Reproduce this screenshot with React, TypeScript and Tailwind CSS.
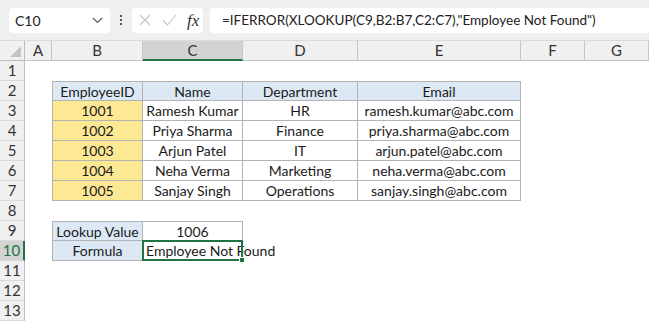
import React from 'react';

type Kind = 'none' | 'head' | 'id' | 'val' | 'label' | 'sel';

type Cell = { text?: string; kind?: Kind; top?: boolean; left?: boolean };

const colLetters = ['A', 'B', 'C', 'D', 'E', 'F', 'G'];

const people = [
  ['1001', 'Ramesh Kumar', 'HR', 'ramesh.kumar@abc.com'],
  ['1002', 'Priya Sharma', 'Finance', 'priya.sharma@abc.com'],
  ['1003', 'Arjun Patel', 'IT', 'arjun.patel@abc.com'],
  ['1004', 'Neha Verma', 'Marketing', 'neha.verma@abc.com'],
  ['1005', 'Sanjay Singh', 'Operations', 'sanjay.singh@abc.com'],
];

const blank = (): Cell[] => Array.from({ length: 7 }, () => ({}));

const buildRows = (): Cell[][] => {
  const rows: Cell[][] = [];
  for (let i = 0; i < 13; i++) rows.push(blank());
  const heads = ['EmployeeID', 'Name', 'Department', 'Email'];
  heads.forEach((h, i) => {
    rows[1][i + 1] = { text: h, kind: 'head', top: true, left: i === 0 };
  });
  people.forEach((p, r) => {
    p.forEach((v, i) => {
      rows[r + 2][i + 1] = { text: v, kind: i === 0 ? 'id' : 'val', left: i === 0 };
    });
  });
  rows[8][1] = { text: 'Lookup Value', kind: 'label', top: true, left: true };
  rows[8][2] = { text: '1006', kind: 'val', top: true };
  rows[9][1] = { text: 'Formula', kind: 'label', left: true };
  rows[9][2] = { text: 'Employee Not Found', kind: 'sel' };
  return rows;
};

const kindClass: Record<Kind, string> = {
  none: '',
  head: 'bg-[#dde8f5] border-r border-b border-[#b3b3b3] justify-center',
  id: 'bg-[#fde993] border-r border-b border-[#b3b3b3] justify-center',
  val: 'border-r border-b border-[#b3b3b3] justify-center',
  label: 'bg-[#dde8f5] border-r border-b border-[#b3b3b3] justify-center',
  sel: 'border-r border-b border-[#b3b3b3] justify-start pl-[3px]',
};

const Toolbar: React.FC = () => (
  <div className="flex h-[41px] items-center bg-[#efefef] pl-[9px] border-b border-[#dadada]">
    <div className="flex h-[25px] w-[101px] items-center justify-between rounded-[4px] bg-white pl-[6px] pr-[7px] text-[14px] text-[#222]">
      <span>C10</span>
      <svg width="11" height="7" viewBox="0 0 11 7" fill="none" stroke="#555" strokeWidth="1.2">
        <path d="M1 1l4.5 4.5L10 1" />
      </svg>
    </div>
    <div className="flex w-[22px] flex-col items-center gap-[2px]">
      <span className="h-[2px] w-[2px] bg-[#555]" />
      <span className="h-[2px] w-[2px] bg-[#555]" />
      <span className="h-[2px] w-[2px] bg-[#555]" />
    </div>
    <div className="flex h-[25px] w-[71px] items-center rounded-[4px] bg-white pl-[6px]">
      <svg width="14" height="14" viewBox="0 0 14 14" fill="none" stroke="#c4c4c4" strokeWidth="1.1">
        <path d="M2 2l10 10M12 2L2 12" />
      </svg>
      <svg className="ml-[10px]" width="15" height="12" viewBox="0 0 15 12" fill="none" stroke="#c4c4c4" strokeWidth="1.1">
        <path d="M1 6.5l4.5 4.5L14 1" />
      </svg>
      <span className="ml-[10px] text-[17px] italic leading-none text-[#333] [font-family:'Liberation_Serif',serif]">fx</span>
    </div>
    <div className="ml-[7px] flex h-[25px] flex-1 items-center rounded-l-[4px] bg-white pl-[12px] text-[13.5px] text-[#222] whitespace-nowrap">
      =IFERROR(XLOOKUP(C9,B2:B7,C2:C7),"Employee Not Found")
    </div>
  </div>
);

export default function App() {
  const rows = buildRows();
  return (
    <div className="h-[322px] w-[649px] overflow-hidden bg-white text-[#1a1a1a] [font-family:Lato,'Open_Sans',sans-serif]">
      <Toolbar />
      <div className="grid grid-cols-[25px_27px_91px_100px_115px_163px_64px_64px] auto-rows-[20px] text-[14px]">
        <div className="relative border-r border-b border-[#bdbdbd] bg-[#f0f0f0]">
          <svg className="absolute bottom-[3px] right-[3px]" width="11" height="11" viewBox="0 0 11 11">
            <path d="M11 0V11H0Z" fill="#c4c4c4" />
          </svg>
        </div>
        {colLetters.map((c) =>
          c === 'C' ? (
            <div key={c} className="flex items-center justify-center border-r border-b-2 border-r-[#c6c6c6] border-b-[#217346] bg-[#d3d3d3] text-[15px] text-[#333]">
              {c}
            </div>
          ) : (
            <div key={c} className="flex items-center justify-center border-r border-b border-[#c6c6c6] bg-[#f0f0f0] text-[15px] text-[#333]">
              {c}
            </div>
          )
        )}
        {rows.map((row, r) => (
          <React.Fragment key={r}>
            {r === 9 ? (
              <div className="flex items-center justify-center border-r-2 border-b border-r-[#217346] border-b-[#dadada] bg-[#d3d3d3] text-[15px] text-[#217346]">
                {r + 1}
              </div>
            ) : (
              <div className="flex items-center justify-center border-r border-b border-r-[#bdbdbd] border-b-[#dadada] bg-[#f0f0f0] text-[15px] text-[#333]">
                {r + 1}
              </div>
            )}
            {row.map((cell, c) => {
              const k = cell.kind ?? 'none';
              return (
                <div
                  key={c}
                  className={`relative flex items-center whitespace-nowrap ${kindClass[k]} ${cell.top ? 'border-t' : ''} ${cell.left ? 'border-l' : ''}`}
                >
                  {cell.text}
                  {k === 'sel' && (
                    <div className="absolute -left-[1px] -top-[1px] -right-[1px] -bottom-[1px] z-10 border-2 border-[#217346]">
                      <span className="absolute -bottom-[4px] -right-[4px] h-[6px] w-[6px] border border-white bg-[#217346]" />
                    </div>
                  )}
                </div>
              );
            })}
          </React.Fragment>
        ))}
      </div>
    </div>
  );
}
